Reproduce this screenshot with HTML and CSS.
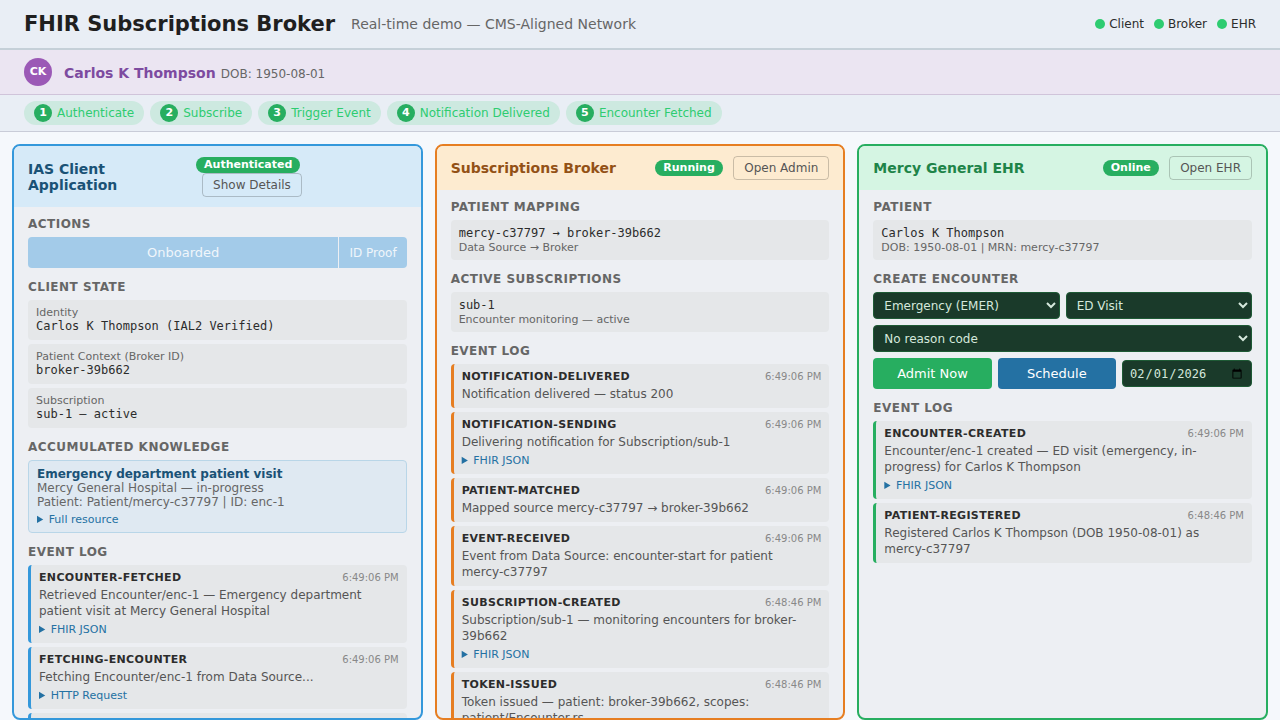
FILE: index.html
```html
<!DOCTYPE html>
<html lang="en">
<head>
    <meta charset="UTF-8">
    <meta name="viewport" content="width=device-width, initial-scale=1.0">
    <title>FHIR Subscriptions Broker</title>
    <link rel="stylesheet" href="styles.css">
</head>
<body>
    <header class="header">
        <h1>FHIR Subscriptions Broker</h1>
        <span class="subtitle">Real-time demo — CMS-Aligned Network</span>
        <div class="status">
            <span class="status-item"><span class="dot"></span>Client</span>
            <span class="status-item"><span class="dot"></span>Broker</span>
            <span class="status-item"><span class="dot"></span>EHR</span>
        </div>
    </header>

    <div class="patient-bar">
        <div class="avatar">CK</div>
        <div>
            <span class="patient-name">Carlos K Thompson</span>
            <span class="patient-dob">DOB: 1950-08-01</span>
        </div>
    </div>

    <div class="steps">
        <div class="step"><span class="step-num">1</span>Authenticate</div>
        <div class="step"><span class="step-num">2</span>Subscribe</div>
        <div class="step"><span class="step-num">3</span>Trigger Event</div>
        <div class="step"><span class="step-num">4</span>Notification Delivered</div>
        <div class="step"><span class="step-num">5</span>Encounter Fetched</div>
    </div>

    <main class="panels">
        <!-- Client -->
        <section class="panel client">
            <div class="panel-header">
                <h2>IAS Client Application</h2>
                <div class="panel-tools">
                    <span class="badge">Authenticated</span>
                    <button type="button" class="btn-outline">Show Details</button>
                </div>
            </div>
            <div class="panel-body">
                <div class="section">
                    <h3>Actions</h3>
                    <div class="split-btn">
                        <button type="button" class="split-main" disabled>Onboarded</button>
                        <button type="button" class="split-side" disabled>ID Proof</button>
                    </div>
                </div>
                <div class="section">
                    <h3>Client State</h3>
                    <div class="card">
                        <div class="label">Identity</div>
                        <div class="value">Carlos K Thompson (IAL2 Verified)</div>
                    </div>
                    <div class="card">
                        <div class="label">Patient Context (Broker ID)</div>
                        <div class="value">broker-39b662</div>
                    </div>
                    <div class="card">
                        <div class="label">Subscription</div>
                        <div class="value">sub-1 — active</div>
                    </div>
                </div>
                <div class="section">
                    <h3>Accumulated Knowledge</h3>
                    <div class="knowledge">
                        <div class="knowledge-title">Emergency department patient visit</div>
                        <div>Mercy General Hospital — in-progress</div>
                        <div>Patient: Patient/mercy-c37797 | ID: enc-1</div>
                        <details>
                            <summary>Full resource</summary>
                        </details>
                    </div>
                </div>
                <div class="section">
                    <h3>Event Log</h3>
                    <div class="event">
                        <div class="event-top"><strong>encounter-fetched</strong><time>6:49:06 PM</time></div>
                        <p>Retrieved Encounter/enc-1 — Emergency department patient visit at Mercy General Hospital</p>
                        <details>
                            <summary>FHIR JSON</summary>
                        </details>
                    </div>
                    <div class="event">
                        <div class="event-top"><strong>fetching-encounter</strong><time>6:49:06 PM</time></div>
                        <p>Fetching Encounter/enc-1 from Data Source...</p>
                        <details>
                            <summary>HTTP Request</summary>
                        </details>
                    </div>
                    <div class="event"></div>
                </div>
            </div>
        </section>

        <!-- Broker -->
        <section class="panel broker">
            <div class="panel-header">
                <h2>Subscriptions Broker</h2>
                <div class="panel-tools">
                    <span class="badge">Running</span>
                    <button type="button" class="btn-outline">Open Admin</button>
                </div>
            </div>
            <div class="panel-body">
                <div class="section">
                    <h3>Patient Mapping</h3>
                    <div class="card">
                        <div class="value">mercy-c37797 → broker-39b662</div>
                        <div class="label">Data Source → Broker</div>
                    </div>
                </div>
                <div class="section">
                    <h3>Active Subscriptions</h3>
                    <div class="card">
                        <div class="value">sub-1</div>
                        <div class="label">Encounter monitoring — active</div>
                    </div>
                </div>
                <div class="section">
                    <h3>Event Log</h3>
                    <div class="event">
                        <div class="event-top"><strong>notification-delivered</strong><time>6:49:06 PM</time></div>
                        <p>Notification delivered — status 200</p>
                    </div>
                    <div class="event">
                        <div class="event-top"><strong>notification-sending</strong><time>6:49:06 PM</time></div>
                        <p>Delivering notification for Subscription/sub-1</p>
                        <details>
                            <summary>FHIR JSON</summary>
                        </details>
                    </div>
                    <div class="event">
                        <div class="event-top"><strong>patient-matched</strong><time>6:49:06 PM</time></div>
                        <p>Mapped source mercy-c37797 → broker-39b662</p>
                    </div>
                    <div class="event">
                        <div class="event-top"><strong>event-received</strong><time>6:49:06 PM</time></div>
                        <p>Event from Data Source: encounter-start for patient <span class="nowrap">mercy-c37797</span></p>
                    </div>
                    <div class="event">
                        <div class="event-top"><strong>subscription-created</strong><time>6:48:46 PM</time></div>
                        <p>Subscription/sub-1 — monitoring encounters for broker-39b662</p>
                        <details>
                            <summary>FHIR JSON</summary>
                        </details>
                    </div>
                    <div class="event">
                        <div class="event-top"><strong>token-issued</strong><time>6:48:46 PM</time></div>
                        <p>Token issued — patient: broker-39b662, scopes: patient/Encounter.rs</p>
                    </div>
                </div>
            </div>
        </section>

        <!-- EHR -->
        <section class="panel ehr">
            <div class="panel-header">
                <h2>Mercy General EHR</h2>
                <div class="panel-tools">
                    <span class="badge">Online</span>
                    <button type="button" class="btn-outline">Open EHR</button>
                </div>
            </div>
            <div class="panel-body">
                <div class="section">
                    <h3>Patient</h3>
                    <div class="card">
                        <div class="value">Carlos K Thompson</div>
                        <div class="label">DOB: 1950-08-01 | MRN: mercy-c37797</div>
                    </div>
                </div>
                <form class="section">
                    <h3>Create Encounter</h3>
                    <div class="form-row">
                        <select class="field" aria-label="Encounter class">
                            <option>Emergency (EMER)</option>
                        </select>
                        <select class="field" aria-label="Encounter type">
                            <option>ED Visit</option>
                        </select>
                    </div>
                    <div class="form-row">
                        <select class="field" aria-label="Reason code">
                            <option>No reason code</option>
                        </select>
                    </div>
                    <div class="form-row">
                        <button type="button" class="btn btn-green">Admit Now</button>
                        <button type="button" class="btn btn-blue">Schedule</button>
                        <input type="date" class="field date" value="2026-02-01" aria-label="Scheduled date">
                    </div>
                </form>
                <div class="section">
                    <h3>Event Log</h3>
                    <div class="event">
                        <div class="event-top"><strong>encounter-created</strong><time>6:49:06 PM</time></div>
                        <p>Encounter/enc-1 created — ED visit (emergency, in-progress) for Carlos K Thompson</p>
                        <details>
                            <summary>FHIR JSON</summary>
                        </details>
                    </div>
                    <div class="event">
                        <div class="event-top"><strong>patient-registered</strong><time>6:48:46 PM</time></div>
                        <p>Registered Carlos K Thompson (DOB 1950-08-01) as mercy-c37797</p>
                    </div>
                </div>
            </div>
        </section>
    </main>
</body>
</html>
```
FILE: styles.css
```css
:root {
    --green: #27ae60;
    --blue: #2471a3;
    --text: #2c2c2c;
    --text-mid: #555555;
    --text-light: #666666;
    --box: #e5e7e9;
    --sans: "DejaVu Sans", sans-serif;
    --mono: "DejaVu Sans Mono", monospace;
}

* {
    box-sizing: border-box;
    margin: 0;
    padding: 0;
}

body {
    font-family: var(--sans);
    background: #f5f8fc;
    color: var(--text);
    height: 100vh;
    display: flex;
    flex-direction: column;
    overflow: hidden;
}

button,
select,
input {
    font-family: inherit;
}

/* Top bars */
.header {
    display: flex;
    align-items: center;
    gap: 16px;
    padding: 12px 24px;
    background: #e9eef5;
    border-bottom: 2px solid #c5d0d8;
}

.header h1 {
    font-size: 21px;
    line-height: 24px;
    color: #1f1f1f;
}

.subtitle {
    font-size: 14px;
    color: var(--text-light);
}

.status {
    display: flex;
    gap: 10px;
    margin-left: auto;
    font-size: 12px;
}

.status-item {
    display: flex;
    align-items: center;
    gap: 4px;
}

.dot {
    width: 10px;
    height: 10px;
    border-radius: 50%;
    background: #2ecc71;
}

.patient-bar {
    display: flex;
    align-items: center;
    gap: 12px;
    padding: 8px 24px;
    background: #ebe5f2;
    border-bottom: 1px solid #d0c4da;
}

.avatar {
    width: 28px;
    height: 28px;
    border-radius: 50%;
    background: #9b59b6;
    color: white;
    font-size: 11px;
    font-weight: 700;
    line-height: 28px;
    text-align: center;
}

.patient-name {
    font-size: 14px;
    font-weight: 700;
    color: #7d4ba0;
}

.patient-dob {
    font-size: 12px;
    color: var(--text-light);
}

.steps {
    display: flex;
    gap: 6px;
    padding: 6px 24px;
    background: #e9eef5;
    border-bottom: 1px solid #c9ccd8;
}

.step {
    display: flex;
    align-items: center;
    gap: 5px;
    padding: 3px 10px;
    border-radius: 12px;
    background: #cde9e0;
    color: #2ecc71;
    font-size: 12px;
}

.step-num {
    width: 18px;
    height: 18px;
    border-radius: 50%;
    background: var(--green);
    color: white;
    font-size: 11px;
    font-weight: 700;
    line-height: 18px;
    text-align: center;
}

/* Panels */
.panels {
    flex: 1;
    min-height: 0;
    display: grid;
    grid-template-columns: repeat(3, minmax(0, 1fr));
    grid-template-rows: minmax(0, 1fr);
    gap: 12px;
    padding: 12px 12px 0;
}

.panel {
    --accent: #3498db;
    display: flex;
    flex-direction: column;
    border: 2px solid var(--accent);
    border-radius: 8px;
    background: #edeff3;
    overflow: hidden;
}

.panel-header {
    display: flex;
    justify-content: space-between;
    align-items: center;
    padding: 10px 14px;
}

.panel-header h2 {
    font-size: 14px;
    line-height: 16px;
}

.panel-tools {
    font-size: 14px;
    line-height: 16px;
}

.client {
    --accent: #3498db;
}

.client .panel-header {
    background: #d6eaf8;
    color: #1a5276;
}

.broker {
    --accent: #e67e22;
}

.broker .panel-header {
    background: #fdebd0;
    color: #935116;
}

.ehr {
    --accent: #27ae60;
}

.ehr .panel-header {
    background: #d5f5e3;
    color: #1e8449;
}

.badge {
    display: inline-block;
    padding: 1px 8px;
    border-radius: 10px;
    background: var(--green);
    color: white;
    font-size: 11px;
    font-weight: 700;
    line-height: 14px;
    vertical-align: middle;
}

.btn-outline {
    margin-left: 6px;
    padding: 4px 10px;
    border: 1px solid rgba(0, 0, 0, 0.2);
    border-radius: 4px;
    background: transparent;
    color: var(--text-mid);
    font-size: 12px;
    line-height: 14px;
    vertical-align: middle;
    cursor: pointer;
}

.panel-body {
    flex: 1;
    min-height: 0;
    padding: 10px 14px;
    overflow: hidden;
}

.section {
    margin-bottom: 12px;
}

.section h3 {
    margin-bottom: 6px;
    color: var(--text-light);
    font-size: 12px;
    line-height: 14px;
    letter-spacing: 0.04em;
    text-transform: uppercase;
}

.split-btn {
    display: flex;
    gap: 1px;
    border-radius: 4px;
    overflow: hidden;
}

.split-btn button {
    height: 31px;
    border: none;
    background: #a3cbe9;
    color: #f0f6fb;
    font-size: 12px;
}

.split-btn .split-main {
    flex: 1;
    font-size: 13px;
}

.split-side {
    padding: 0 10px;
}

.card {
    padding: 6px 8px;
    border-radius: 4px;
    background: var(--box);
}

.card + .card {
    margin-top: 4px;
}

.label {
    color: var(--text-light);
    font-size: 11px;
    line-height: 13px;
}

.value {
    font-family: var(--mono);
    font-size: 12px;
    line-height: 15px;
}

.knowledge {
    padding: 6px 8px;
    border: 1px solid #b9d6e8;
    border-radius: 4px;
    background: #dfe9f2;
    color: var(--text-light);
    font-size: 12px;
    line-height: 14px;
}

.knowledge-title {
    color: #1a5276;
    font-weight: 700;
}

details {
    margin-top: 4px;
}

summary {
    color: var(--blue);
    font-size: 11px;
    line-height: 13px;
    cursor: pointer;
}

/* Event log */
.event {
    padding: 6px 8px;
    border-left: 3px solid var(--accent);
    border-radius: 4px;
    background: var(--box);
}

.event + .event {
    margin-top: 4px;
}

.event-top {
    display: flex;
    justify-content: space-between;
    line-height: 14px;
    font-size: 11px;
}

.event-top strong {
    text-transform: uppercase;
    letter-spacing: 0.03em;
}

.event-top time {
    color: #888888;
    font-size: 10px;
}

.event p {
    margin-top: 2px;
    color: var(--text-mid);
    font-size: 12px;
    line-height: 16px;
}

.event details {
    margin-bottom: 1px;
}

.nowrap {
    white-space: nowrap;
}

/* Encounter form */
.form-row {
    display: flex;
    align-items: center;
    gap: 6px;
}

.form-row + .form-row {
    margin-top: 6px;
}

.field {
    flex: 1;
    min-width: 0;
    height: 27px;
    padding: 0 6px;
    border: 1px solid #1e5a35;
    border-radius: 4px;
    background: #1a3a2a;
    color: #d5e8dc;
    font-size: 12px;
}

.date {
    flex: 0 0 130px;
    font-family: var(--mono);
}

.btn {
    flex: 1;
    height: 31px;
    border: none;
    border-radius: 4px;
    color: white;
    font-size: 13px;
    cursor: pointer;
}

.btn-green {
    background: var(--green);
}

.btn-blue {
    background: var(--blue);
}
```
